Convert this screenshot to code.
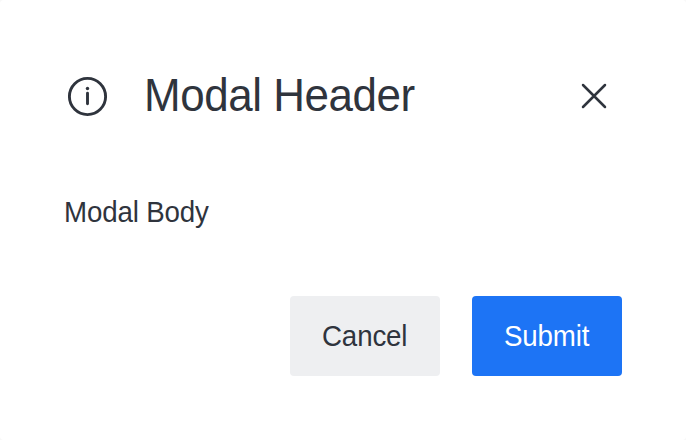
<section class="modal" role="dialog" aria-labelledby="title">
  <header>
    <svg class="info" width="48" height="48" viewBox="0 0 48 48" fill="none" aria-hidden="true">
      <circle cx="23.5" cy="24.5" r="18.1" stroke="currentColor" stroke-width="2.9" />
      <path d="M23.5 21.2v10.6" stroke="currentColor" stroke-width="2.9" stroke-linecap="round" />
      <circle cx="23.5" cy="16.5" r="1.7" fill="currentColor" />
    </svg>
    <h1 id="title">Modal Header</h1>
    <button class="close" aria-label="Close">
      <svg width="28" height="28" viewBox="0 0 28 28" fill="none" aria-hidden="true">
        <path d="M3 3l22 22M25 3L3 25" stroke="currentColor" stroke-width="2.5" stroke-linecap="round" />
      </svg>
    </button>
  </header>
  <p>Modal Body</p>
  <footer>
    <button class="action cancel"><span>Cancel</span></button>
    <button class="action submit"><span>Submit</span></button>
  </footer>
</section>

<style>
  :global(body) { background: #f8f8f8; }
  .modal {
    box-sizing: border-box;
    width: 686px;
    height: 440px;
    padding: 64px;
    display: flex;
    flex-direction: column;
    background: #fff;
    border-radius: 4px;
    color: #2f343d;
    font-family: "Liberation Sans", Arial, sans-serif;
  }
  header { display: flex; align-items: center; height: 64px; }
  .info { margin-right: 32px; }
  h1 { margin: 0; font-size: 46px; line-height: 62px; padding-bottom: 2px; font-weight: 400; letter-spacing: -0.45px; flex: 1; transform: scaleX(0.955); transform-origin: left; }
  button { border: 0; padding: 0; font: inherit; color: inherit; }
  .close { background: none; width: 28px; height: 28px; margin-right: 14px; }
  .close svg { display: block; }
  p { margin: 64px 0 0; font-size: 29px; line-height: 41px; letter-spacing: -0.15px; transform: scaleX(0.955); transform-origin: left; }
  footer { margin-top: auto; display: flex; justify-content: flex-end; gap: 32px; }
  .action { width: 150px; height: 80px; padding-top: 1px; border-radius: 4px; font-size: 29px; letter-spacing: -0.15px; background: #eeeff1; }
  .action span { display: inline-block; transform: scaleX(0.955); }
  .submit { background: #1d74f5; color: #fff; }
</style>
